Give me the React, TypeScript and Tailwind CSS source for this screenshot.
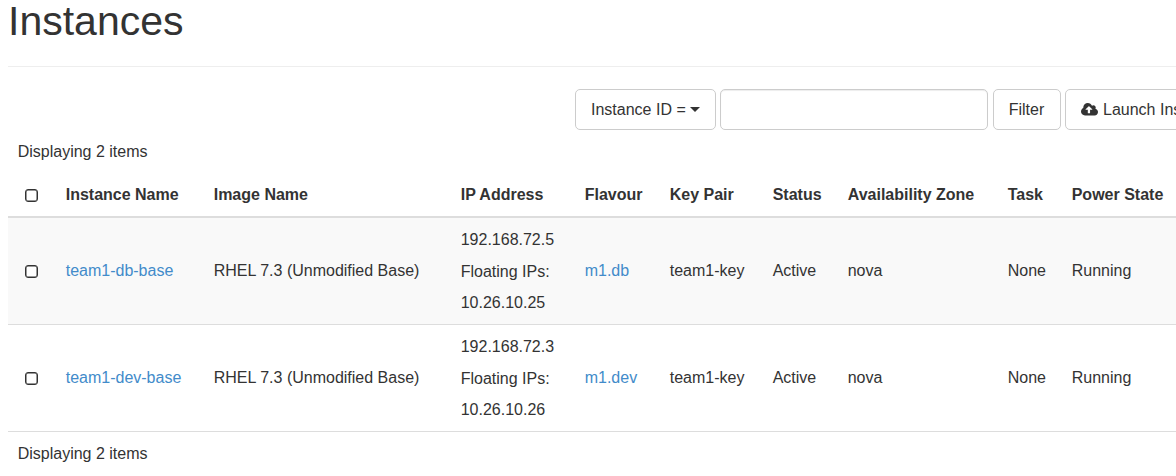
const columns = ["Instance Name", "Image Name", "IP Address", "Flavour", "Key Pair", "Status", "Availability Zone", "Task", "Power State"];

const instances = [
  { name: "team1-db-base", fixed: "192.168.72.5", floating: "10.26.10.25", flavour: "m1.db" },
  { name: "team1-dev-base", fixed: "192.168.72.3", floating: "10.26.10.26", flavour: "m1.dev" },
];

const grid = "grid grid-cols-[48px_148px_247px_124px_85px_103px_75px_160px_64px_124px]";

function Checkbox() {
  return (
    <div className="flex items-center pl-[17px]">
      <input type="checkbox" className="h-[13px] w-[13px] appearance-none rounded-[3px] border border-[#333] bg-white shadow-[inset_0_0_0_0.5px_#333]" />
    </div>
  );
}

function CloudUpload() {
  return (
    <svg viewBox="0 0 1920 1408" className="h-[12.5px] w-[17px]" fill="currentColor">
      <path fillRule="evenodd" d="M1280 736q0-14-9-23L919 361q-9-9-23-9t-23 9L522 712q-10 12-10 24 0 14 9 23t23 9h224v352q0 13 9.500 22.500t22.500 9.500h192q13 0 22.500-9.500t9.500-22.500V768h224q13 0 22.500-9.500t9.500-22.500zM1920 1024q0 159-112.500 271.500T1536 1408H448q-185 0-316.500-131.500T0 960q0-130 70-240t188-165q-2-30-2-43 0-212 150-362T768 0q156 0 285.500 87T1242 318q71-62 166-62 106 0 181 75t75 181q0 76-41 138 130 31 213.500 135.500T1920 1024z" />
    </svg>
  );
}

export default function App() {
  return (
    <div className="h-[476px] w-[1176px] overflow-hidden bg-white pl-2 font-['Liberation_Sans',Arial,sans-serif] text-[16px] text-[#333]">
      <h1 className="h-[67px] border-b border-[#eee] text-[41px] leading-[43px]">Instances</h1>
      <div className="mt-[22px] flex h-[41px] gap-[4px] pl-[567px] whitespace-nowrap">
        <button className="flex w-[141px] shrink-0 items-center gap-1 rounded-[5px] border border-[#ccc] pl-[15px]">
          Instance ID =
          <svg viewBox="0 0 10 5" className="h-[5px] w-[10px]" fill="currentColor"><path d="M0 0h10L5 5z" /></svg>
        </button>
        <input aria-label="Filter value" className="w-[268px] shrink-0 rounded-[5px] border border-[#ccc] shadow-[inset_0_1px_1px_rgba(0,0,0,0.075)]" />
        <button className="ml-px w-[68px] shrink-0 rounded-[5px] border border-[#ccc] pr-px">Filter</button>
        <button className="flex w-[170px] shrink-0 items-center gap-[5px] rounded-[5px] border border-[#ccc] pl-[15px]">
          <CloudUpload /> Launch Instance
        </button>
      </div>
      <p className="h-[42px] pt-[10px] pl-[9.700px] leading-6">Displaying 2 items</p>
      <div className={`${grid} h-[46px] border-b-2 border-[#ddd] font-bold`}>
        <div className="flex pt-[3px]"><Checkbox /></div>
        {columns.map((c) => <div key={c} className="pt-[11px] pl-[9.700px] leading-6 whitespace-nowrap">{c}</div>)}
      </div>
      <div>
        {instances.map((i) => (
          <div key={i.name} className={`${grid} h-[107px] items-center border-b border-[#ddd] whitespace-nowrap odd:bg-[#f9f9f9] even:bg-white`}>
            <div className="flex pt-px"><Checkbox /></div>
            <a className="pl-[9.700px] text-[#428bca]">{i.name}</a>
            <span className="pl-[9.700px]">RHEL 7.3 (Unmodified Base)</span>
            <div className="pl-[9.700px]">
              <div className="leading-[32px]">{i.fixed}</div>
              <div className="leading-[32px]">Floating IPs:</div>
              <div className="leading-[30px]">{i.floating}</div>
            </div>
            <a className="pl-[9.700px] text-[#428bca]">{i.flavour}</a>
            <span className="pl-[9.700px]">team1-key</span>
            <span className="pl-[9.700px]">Active</span>
            <span className="pl-[9.700px]">nova</span>
            <span className="pl-[9.700px]">None</span>
            <span className="pl-[9.700px]">Running</span>
          </div>
        ))}
      </div>
      <p className="pt-[10px] pl-[9.700px] leading-6">Displaying 2 items</p>
    </div>
  );
}
